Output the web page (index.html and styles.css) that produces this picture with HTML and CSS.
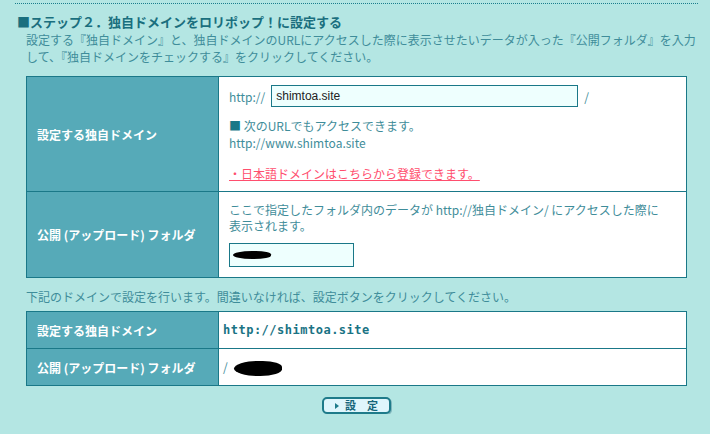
FILE: index.html
```html
<!DOCTYPE html>
<html lang="ja">
  <head>
    <meta charset="UTF-8" />
    <title>独自ドメイン設定</title>
    <link rel="stylesheet" href="styles.css">
  </head>
  <body>
    <div class="rule"></div>
    <h2 class="step-title">■ステップ２．独自ドメインをロリポップ！に設定する</h2>
    <p class="lead">
      設定する『独自ドメイン』と、独自ドメインのURLにアクセスした際に表示させたいデータが入った『公開フォルダ』を入力<br />
      して、『独自ドメインをチェックする』をクリックしてください。
    </p>

    <table class="form-table">
      <tr class="row-domain">
        <th>設定する独自ドメイン</th>
        <td>
          <div class="domain-line">
            <span>http://</span>
            <input type="text" class="domain-input" value="shimtoa.site" />
            <span>/</span>
          </div>
          <p class="note"><span class="mark">■</span> 次のURLでもアクセスできます。<br />http://www.shimtoa.site</p>
          <a class="jp-link" href="#">・日本語ドメインはこちらから登録できます。</a>
        </td>
      </tr>
      <tr class="row-folder">
        <th>公開 (アップロード) フォルダ</th>
        <td>
          <p class="note">ここで指定したフォルダ内のデータが http://独自ドメイン/ にアクセスした際に<br />表示されます。</p>
          <div class="folder-input"><span class="blot blot-small"></span></div>
        </td>
      </tr>
    </table>

    <p class="confirm-text">下記のドメインで設定を行います。間違いなければ、設定ボタンをクリックしてください。</p>

    <table class="form-table confirm-table">
      <tr>
        <th>設定する独自ドメイン</th>
        <td class="domain-value">http://shimtoa.site</td>
      </tr>
      <tr>
        <th>公開 (アップロード) フォルダ</th>
        <td class="folder-value">/<span class="blot blot-large"></span></td>
      </tr>
    </table>

    <div class="actions">
      <button class="submit-btn"><span class="arrow"></span>設　定</button>
    </div>
  </body>
</html>
```

FILE: styles.css
```css
body {
  margin: 0;
  padding: 0;
  background-color: #b4e6e3;
  font-family: "Noto Sans CJK JP", "Noto Sans", sans-serif;
  font-size: 12px;
  color: #3f8d9a;
}

.rule {
  margin: 3px 12px 0 15px;
  border-top: 1px dotted #1b7d8c;
}

.step-title {
  margin: 9px 0 0 17px;
  font-size: 13px;
  line-height: 18px;
  color: #1a6f7e;
}

.lead {
  margin: 0 0 0 26px;
  line-height: 17px;
}

.form-table {
  margin: 11px 0 0 26px;
  width: 661px;
  border-collapse: collapse;
  background-color: #fff;
}

.form-table th,
.form-table td {
  border: 1px solid #1a7888;
  vertical-align: middle;
}

.form-table th {
  width: 181px;
  padding: 0 0 0 10px;
  background-color: #56aab8;
  color: #fff;
  font-weight: bold;
  text-align: left;
}

.form-table td {
  padding: 0 10px;
}

.row-domain {
  height: 115px;
}

.row-domain td {
  vertical-align: top;
  padding-top: 8px;
}

.domain-line {
  display: flex;
  align-items: center;
  gap: 6px;
}

.domain-input {
  width: 297px;
  height: 20px;
  margin: 0;
  padding: 0 4px;
  border: 1px solid #1a7888;
  background-color: #eefffe;
  font-family: "Liberation Sans", Arial, sans-serif;
  font-size: 12px;
  color: #222;
}

.note {
  margin: 10px 0 0 0;
  line-height: 17px;
}

.mark {
  color: #1a7888;
}

.jp-link {
  display: inline-block;
  margin-top: 14px;
  color: #ff4e6e;
  line-height: 17px;
}

.row-folder {
  height: 86px;
}

.row-folder .note {
  margin-top: 0;
  line-height: 16px;
}

.folder-input {
  width: 125px;
  height: 24px;
  margin-top: 9px;
  padding-left: 3px;
  border: 1px solid #1a7888;
  background-color: #eefffe;
  display: flex;
  align-items: center;
  box-sizing: border-box;
}

.blot {
  display: inline-block;
  background-color: #000;
  border-radius: 50% 40% 45% 50%;
}

.blot-small {
  width: 38px;
  height: 8px;
}

.blot-large {
  width: 48px;
  height: 15px;
  margin-left: 6px;
  vertical-align: middle;
}

.confirm-text {
  margin: 10px 0 0 26px;
  line-height: 17px;
}

.confirm-table {
  margin-top: 6px;
}

.confirm-table tr {
  height: 37px;
}

.confirm-table td {
  padding-left: 4px;
}

.domain-value {
  font-family: "DejaVu Sans Mono", monospace;
  font-weight: bold;
  font-size: 12px;
  letter-spacing: 0.5px;
  color: #1a7384;
}

.folder-value {
  color: #3f8d9a;
}

.actions {
  margin-top: 11px;
  padding-left: 322px;
}

.submit-btn {
  width: 69px;
  height: 17px;
  padding: 0;
  border: 2px solid #1e7b8a;
  border-radius: 5px;
  background-color: #dff6fc;
  box-shadow: 1px 1px 0 #7fb6bd;
  color: #15657a;
  font-family: "Noto Sans CJK JP", sans-serif;
  font-size: 11px;
  font-weight: bold;
  line-height: 13px;
  display: flex;
  align-items: center;
  justify-content: center;
  gap: 6px;
}

.arrow {
  width: 0;
  height: 0;
  border-top: 3px solid transparent;
  border-bottom: 3px solid transparent;
  border-left: 4px solid #1e7b8a;
}
```
